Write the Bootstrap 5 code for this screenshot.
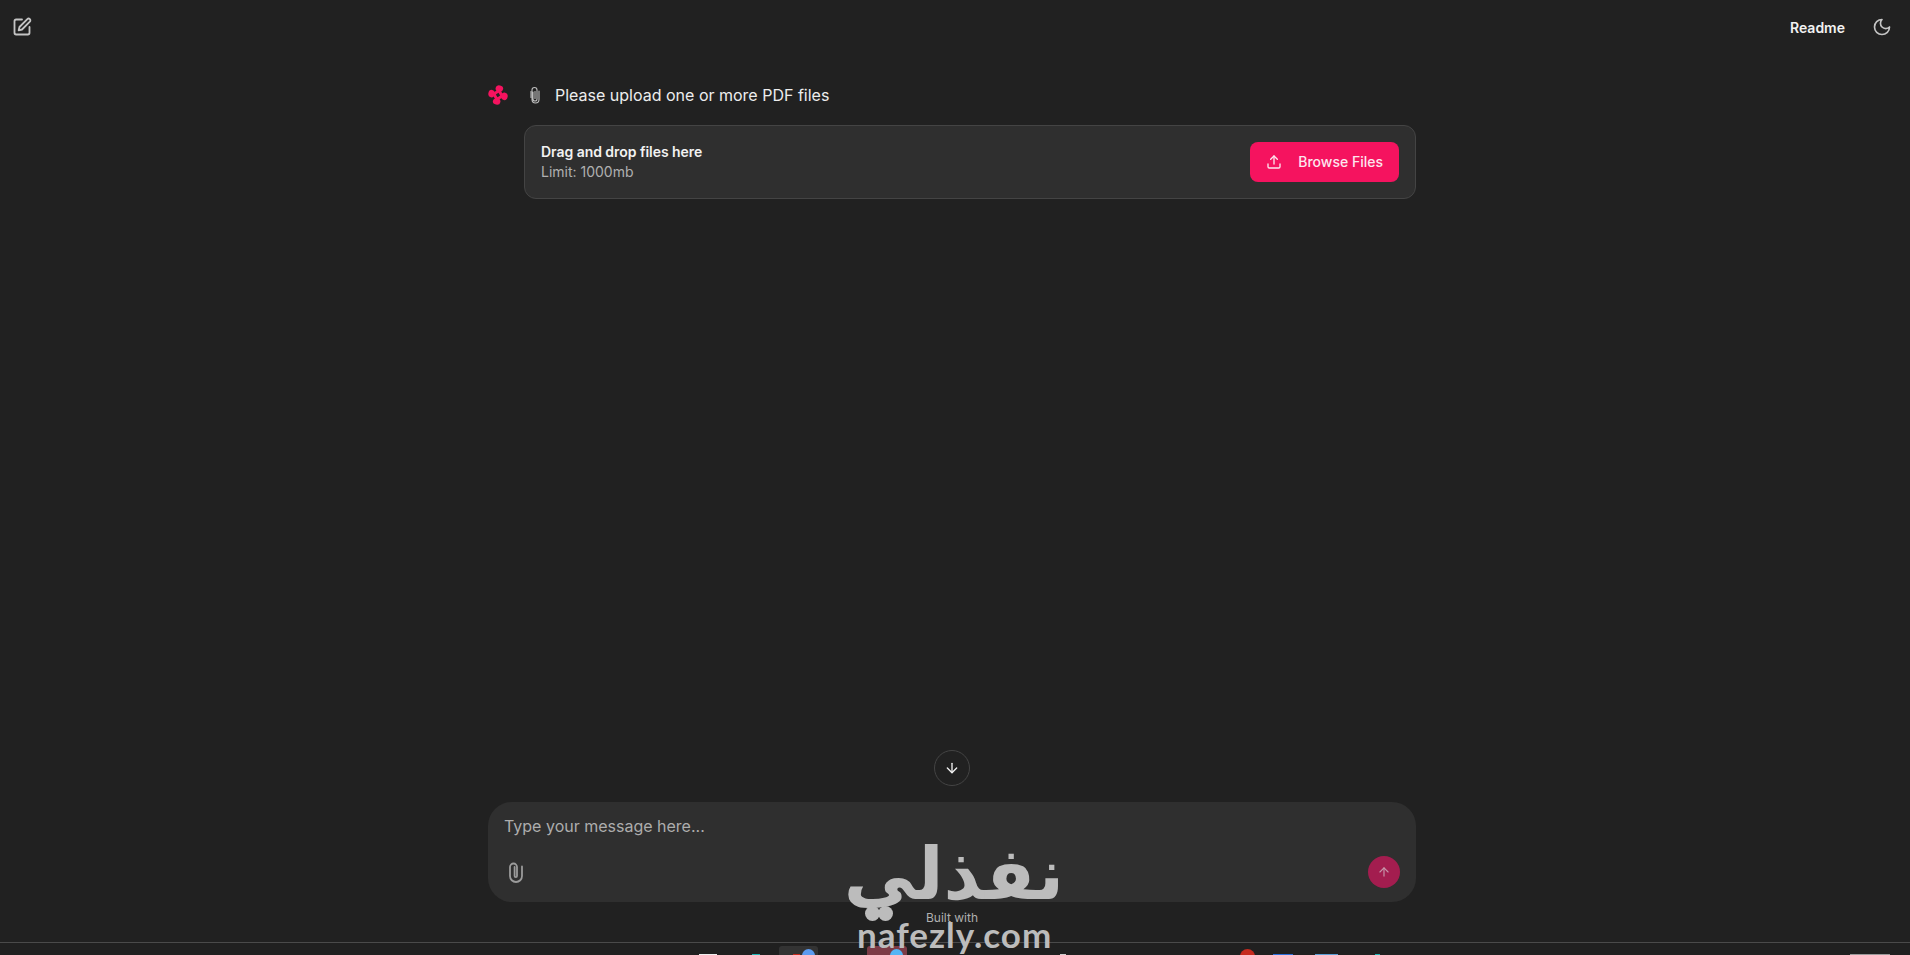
<!DOCTYPE html>
<html lang="en">

<head>
    <meta charset="UTF-8">
    <meta name="viewport" content="width=device-width, initial-scale=1.0">
    <title>Chat</title>
    <link href="https://cdn.jsdelivr.net/npm/bootstrap@5.3.3/dist/css/bootstrap.min.css" rel="stylesheet">
    <style>
        html, body { height: 100%; }
        body { background: #212121; color: #f2f2f2; font-family: Inter, "Liberation Sans", sans-serif; overflow: hidden; }
        .app-shell { height: 955px; position: relative; }
        .app-main { height: 942px; }
        .top-bar { height: 54px; padding: 0 18px 0 12px; }
        .top-icon { color: #c4c4c4; }
        .readme-link { font-size: 14px; font-weight: 600; color: #f2f2f2; margin-right: 27px; }
        .chat-column { width: 928px; margin-left: 488px; }
        .msg-row { height: 30px; margin-top: 26px; }
        .msg-logo { width: 20px; margin-right: 22px; }
        .msg-clip { width: 12px; margin-right: 14px; margin-left: -1px; }
        .msg-text { font-size: 16px; color: #ededed; }
        .upload-card { margin: 15px 0 0 36px; height: 74px; background: #2f2f2f; border: 1px solid #444; border-radius: 12px; padding: 0 16px; }
        .upload-title { font-size: 14px; font-weight: 600; line-height: 20px; color: #f2f2f2; letter-spacing: -.003em; }
        .upload-limit { font-size: 14px; line-height: 20px; color: #b0b0b0; }
        .browse-btn { width: 149px; height: 40px; background: #f5135f; border: 0; border-radius: 8px; color: #fde6ee; font-size: 14px; font-weight: 500; padding: 0 16px; }
        .browse-btn:hover { background: #f5135f; color: #fde6ee; }
        .browse-btn span { position: relative; top: -1px; }
        .down-btn { width: 36px; height: 36px; border: 1px solid #444; border-radius: 50%; background: #212121; color: #f2f2f2; padding: 0; align-self: center; margin-left: -1px; margin-bottom: 16px; }
        .composer { height: 100px; background: #2f2f2f; border-radius: 24px; padding: 12px 16px 14px 16px; }
        .composer-text { font-size: 16px; line-height: 24px; color: #adadad; }
        .composer-clip { color: #9b9b9b; }
        .send-btn { width: 32px; height: 32px; border: 0; border-radius: 50%; background: #a31d4f; color: #c795aa; padding: 0; }
        .built-with { height: 40px; font-size: 12px; color: #b0b0b0; padding-top: 7px; text-align: center; }
        .task-bar { height: 13px; border-top: 1px solid #4a4a4a; background: #202020; overflow: hidden; position: relative; }
        .task-item { position: absolute; }
        .tile-dark { left: 779px; top: 3px; width: 39px; height: 12px; background: #333; border-radius: 3px; }
        .tile-red { left: 867px; top: 3px; width: 40px; height: 12px; background: #7d3b46; border-radius: 3px; }
        .peek-white { left: 699px; top: 11px; width: 18px; height: 3px; background: #eee; }
        .peek-teal { left: 752px; top: 11px; width: 8px; height: 3px; background: #1fb5b5; }
        .peek-smudge { left: 793px; top: 11px; width: 7px; height: 3px; background: #c62a1e; }
        .circle-blue { left: 802px; top: 6px; width: 13px; height: 13px; background: #5b9bf0; border-radius: 50%; }
        .circle-sky { left: 890px; top: 6px; width: 13px; height: 13px; background: #55b5f5; border-radius: 50%; }
        .circle-badge { left: 1240px; top: 6px; width: 15px; height: 15px; background: #c62a1e; border-radius: 50%; }
        .peek-blue { left: 1273px; top: 11px; width: 20px; height: 3px; background: #2a6fdc; }
        .peek-sky { left: 1315px; top: 11px; width: 23px; height: 3px; background: #5a9fd6; }
        .peek-tealb { left: 1375px; top: 11px; width: 5px; height: 3px; background: #1fb5b5; }
        .peek-grey { left: 1060px; top: 11px; width: 6px; height: 2px; background: #ccc; }
        .peek-clock { left: 1850px; top: 11px; width: 40px; height: 2px; background: #999; }
        .wm-arabic { position: absolute; left: 852px; top: 826px; width: 212px; text-align: center; font-family: "DejaVu Sans", sans-serif; font-weight: 700; font-size: 72px; line-height: 96px; color: #bcbcbc; pointer-events: none; }
        .wm-latin { position: absolute; left: 857px; top: 912px; font-family: Lato, "Liberation Sans", sans-serif; font-weight: 700; font-size: 35px; line-height: 44px; letter-spacing: 1px; color: #bcbcbc; pointer-events: none; }
        .wm-dot { position: absolute; top: 906px; width: 15px; height: 15px; border-radius: 50%; background: #bcbcbc; }
        .wm-dot-a { left: 865px; }
        .wm-dot-b { left: 878px; }
    </style>
</head>

<body>
    <div class="app-shell">
        <div class="app-main d-flex flex-column">
            <!-- header -->
            <div class="top-bar d-flex align-items-center justify-content-between flex-shrink-0">
                <svg class="top-icon" width="20" height="20" viewBox="0 0 24 24" fill="none" stroke="currentColor" stroke-width="2.2" stroke-linecap="round" stroke-linejoin="round"><path d="M12 3H5a2 2 0 0 0-2 2v14a2 2 0 0 0 2 2h14a2 2 0 0 0 2-2v-7"/><path d="M18.4 2.6a2.1 2.1 0 0 1 3 3L12 15l-4 1 1-4z"/></svg>
                <div class="d-flex align-items-center">
                    <span class="readme-link">Readme</span>
                    <svg class="top-icon" width="20" height="20" viewBox="0 0 24 24" fill="none" stroke="currentColor" stroke-width="2" stroke-linecap="round" stroke-linejoin="round"><path d="M12 3a6 6 0 0 0 9 9 9 9 0 1 1-9-9Z"/></svg>
                </div>
            </div>

            <!-- messages -->
            <div class="chat-column flex-grow-1 d-flex flex-column">
                <div class="msg-row d-flex align-items-center">
                    <svg class="msg-logo" width="20" height="20" viewBox="0 0 20 20" fill="#f5135f">
                        <g transform="rotate(12 10 10)">
                            <path d="M10 3.500 16.500 10 10 16.500 3.500 10Z M10 7.800 7.800 10 10 12.200 12.200 10Z" fill-rule="evenodd"/>
                            <ellipse cx="10" cy="3.400" rx="3.800" ry="3.200"/>
                            <ellipse cx="10" cy="16.600" rx="3.800" ry="3.200"/>
                            <ellipse cx="3.400" cy="10" rx="3.200" ry="3.800"/>
                            <ellipse cx="16.600" cy="10" rx="3.200" ry="3.800"/>
                        </g>
                    </svg>
                    <svg class="msg-clip" width="12" height="18" viewBox="0 0 12 18" fill="none" stroke="#bdbdbd" stroke-width="1.100" stroke-linecap="round"><path d="M4 6v7a2 2 0 0 0 4 0V4a2.500 2.500 0 0 0-5 0v9.500a3.500 3.500 0 0 0 7 0V5"/><path d="M6 5.500v7"/><path d="M2 5.500v6"/></svg>
                    <span class="msg-text">Please upload one or more PDF files</span>
                </div>
                <div class="upload-card d-flex align-items-center justify-content-between">
                    <div>
                        <div class="upload-title">Drag and drop files here</div>
                        <div class="upload-limit">Limit: 1000mb</div>
                    </div>
                    <button class="btn browse-btn d-flex align-items-center justify-content-between" type="button">
                        <svg width="16" height="16" viewBox="0 0 24 24" fill="none" stroke="currentColor" stroke-width="2" stroke-linecap="round" stroke-linejoin="round"><path d="M21 15v4a2 2 0 0 1-2 2H5a2 2 0 0 1-2-2v-4"/><path d="m17 8-5-5-5 5"/><path d="M12 3v12"/></svg>
                        <span>Browse Files</span>
                    </button>
                </div>

                <div class="mt-auto d-flex flex-column">
                    <button class="btn down-btn d-flex align-items-center justify-content-center" type="button" aria-label="Scroll down">
                        <svg width="16" height="16" viewBox="0 0 24 24" fill="none" stroke="currentColor" stroke-width="2" stroke-linecap="round" stroke-linejoin="round"><path d="M12 5v14"/><path d="m19 12-7 7-7-7"/></svg>
                    </button>
                    <div class="composer d-flex flex-column justify-content-between">
                        <div class="composer-text">Type your message here...</div>
                        <div class="d-flex align-items-center justify-content-between">
                            <svg class="composer-clip" width="24" height="24" viewBox="0 0 24 24" fill="none" stroke="currentColor" stroke-width="1.800" stroke-linecap="round" stroke-linejoin="round"><path d="M18 6.500V16a6 6 0 0 1-12 0V7a3.500 3.500 0 0 1 7 0v9a1.200 1.200 0 0 1-2.400 0V7"/></svg>
                            <button class="btn send-btn d-flex align-items-center justify-content-center" type="button" aria-label="Send">
                                <svg width="14" height="14" viewBox="0 0 24 24" fill="none" stroke="currentColor" stroke-width="2" stroke-linecap="round" stroke-linejoin="round"><path d="M12 19V5"/><path d="m5 12 7-7 7 7"/></svg>
                            </button>
                        </div>
                    </div>
                    <div class="built-with">Built with</div>
                </div>
            </div>
        </div>

        <!-- sliver of the desktop taskbar at the bottom edge -->
        <div class="task-bar">
            <span class="task-item tile-dark"></span>
            <span class="task-item tile-red"></span>
            <span class="task-item peek-white"></span>
            <span class="task-item peek-teal"></span>
            <span class="task-item peek-smudge"></span>
            <span class="task-item circle-blue"></span>
            <span class="task-item circle-sky"></span>
            <span class="task-item peek-grey"></span>
            <span class="task-item circle-badge"></span>
            <span class="task-item peek-blue"></span>
            <span class="task-item peek-sky"></span>
            <span class="task-item peek-tealb"></span>
            <span class="task-item peek-clock"></span>
        </div>

        <!-- watermark over the page -->
        <div class="wm-arabic" dir="rtl" lang="ar">نفذلي</div>
        <span class="wm-dot wm-dot-a"></span>
        <span class="wm-dot wm-dot-b"></span>
        <div class="wm-latin">nafezly.com</div>
    </div>
</body>

</html>
